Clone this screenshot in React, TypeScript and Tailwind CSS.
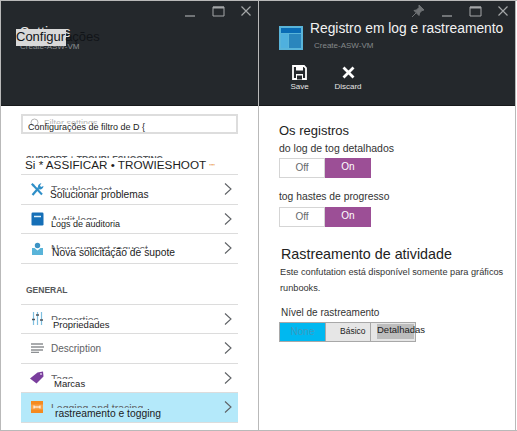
import type { ReactNode } from "react";

interface RowProps {
  icon: ReactNode;
  label: string;
  overlay: string;
  overlayClass: string;
  active?: boolean;
}

function WindowButtons({ pin }: { pin?: boolean }) {
  return (
    <div className="flex justify-end items-center h-[20px] pr-[5px] gap-[14px]">
      {pin && (
        <svg width="14" height="14" viewBox="0 0 14 14" className="mr-[1px]">
          <path d="M8 1l5 5-2 .5-2.500 2.500-.5 2.500-5-5 2.500-.5L8 3.500zM5 9l-4 4" fill="#6f7275" stroke="#6f7275" />
        </svg>
      )}
      <svg width="14" height="14" viewBox="0 0 14 14">
        <path d="M2 12h10" stroke="#8b8e91" strokeWidth="1.500" />
      </svg>
      <svg width="14" height="14" viewBox="0 0 14 14">
        <path d="M2 3h11v9H2z" fill="none" stroke="#a4a6a8" strokeWidth="1" />
        <path d="M2 3.500h11" stroke="#a4a6a8" strokeWidth="2" />
      </svg>
      <svg width="14" height="14" viewBox="0 0 14 14">
        <path d="M2.500 2.500l9 9M11.500 2.500l-9 9" stroke="#a4a6a8" strokeWidth="1.200" />
      </svg>
    </div>
  );
}

function Chevron() {
  return (
    <svg width="10" height="14" viewBox="0 0 10 14">
      <path d="M2 1.500l6 5.500-6 5.500" fill="none" stroke="#5f6266" strokeWidth="1.100" />
    </svg>
  );
}

function Row({ icon, label, overlay, overlayClass, active }: RowProps) {
  return (
    <div className={`relative flex items-center h-[29.500px] border-b-[1.500px] border-[#dcdcdc] ${active ? "bg-[#b4e9fa]" : ""}`}>
      <div className="w-[30px] flex justify-center pl-[2px]">{icon}</div>
      <span className="self-start mt-[8px] h-[7px] overflow-hidden text-[10.500px] leading-[15px] text-[#5e6164]">{label}</span>
      <div className="ml-auto mr-[5px] flex">
        <Chevron />
      </div>
      <span className={`absolute whitespace-nowrap leading-[12px] text-[#1c1c1c] ${overlayClass}`}>{overlay}</span>
    </div>
  );
}

function Toggle() {
  return (
    <div className="flex w-[92px] h-[20px] text-[10px] leading-[18px] text-center">
      <div className="w-[46px] border border-[#d5d5d5] text-[#66696c]">Off</div>
      <div className="w-[46px] bg-[#9c4f96] text-white">On</div>
    </div>
  );
}

const wrench = (
  <svg width="14" height="14" viewBox="0 0 14 14">
    <path d="M3 3l9 9.500" stroke="#2f8fc8" strokeWidth="2" fill="none" />
    <path d="M2.500 13L8.500 6" stroke="#2f8fc8" strokeWidth="2.200" fill="none" />
    <path d="M8 5.500c-.5-2 1-4 3.500-4.500L10 3.500l1 1.500 2.500-1c-.3 2.500-2.500 4-4.500 3.200z" fill="#2f8fc8" />
    <path d="M1 2.500L2.500 1l2 2-1.500 1.500z" fill="#2f8fc8" />
  </svg>
);

const auditLog = (
  <svg width="13" height="14" viewBox="0 0 13 14">
    <rect x="0.500" y="0.500" width="12" height="13" rx="1.200" fill="#156fb7" />
    <path d="M3 4.500h7" stroke="#dff1fb" strokeWidth="1.500" />
  </svg>
);

const support = (
  <svg width="11" height="13" viewBox="0 0 11 13">
    <path d="M0 6l2.500 0 3 2.500 3-2.500 2.500 0v7H0z" fill="#59b4d9" />
    <circle cx="5.500" cy="3.500" r="2.700" fill="#3c93c4" />
  </svg>
);

const sliders = (
  <svg width="11" height="13" viewBox="0 0 11 13">
    <path d="M1.500 0v13M5.500 0v13M9.500 0v13" stroke="#7fbfe0" strokeWidth="1.200" />
    <path d="M0 7.500h3M4 3h3M8 8h3" stroke="#4d5359" strokeWidth="1.500" />
  </svg>
);

const lines = (
  <svg width="13" height="10" viewBox="0 0 13 10">
    <path d="M0 1h12M0 4h13M0 7h12M0 9.500h8" stroke="#8d9093" strokeWidth="1.300" />
  </svg>
);

const tag = (
  <svg width="14" height="13" viewBox="0 0 14 13">
    <path d="M0 7.500L7.500 1.500 13 .5l.5 5-7 7z" fill="#7a3e9d" />
    <circle cx="11" cy="3" r="1" fill="#d9c4e6" />
  </svg>
);

const logging = (
  <svg width="12" height="12" viewBox="0 0 12 12">
    <path d="M0 0h12v12H0z" fill="#f58a1f" />
    <path d="M0 3.500h12v5H0z" fill="#f9a24a" />
    <path d="M3 4.500v3M9 4.500v3M3 6h6" stroke="#ffffff" strokeWidth="1" />
  </svg>
);

export default function App() {
  return (
    <div className="w-[517px] h-[431px] flex bg-white font-['Liberation_Sans',sans-serif] border-y border-[#b9b9b9]">
      {/* painel esquerdo */}
      <div className="w-[259px] border-x border-[#b9b9b9] flex flex-col">
        <div className="relative h-[105px] bg-[#24282c] border-b border-[#17191b] shrink-0">
          <WindowButtons />
          <div className="pl-[19px] pt-[3px] text-[14px] leading-[16px] text-[#e8e8e8]">Settings</div>
          <div className="pl-[19px] mt-[1px] text-[8px] leading-[12px] text-[#8b8e91]">Create-ASW-VM</div>
          <div className="absolute left-[15px] top-[28px] w-[50px] h-[17px] bg-[#d9d9d9]" />
          <span className="absolute left-[15px] top-[27px] text-[13px] leading-[18px] text-[#111418]">Configurações</span>
        </div>

        <div className="px-[20px] pt-[8px]">
          <div className="relative h-[20px] border-2 border-[#dddddd] flex items-start pt-[2px] pl-[7px] gap-[5px]">
            <svg width="9" height="9" viewBox="0 0 9 9">
              <circle cx="4.500" cy="4.500" r="3.500" fill="none" stroke="#b5b5b5" />
            </svg>
            <span className="h-[6px] overflow-hidden text-[9px] leading-[10px] text-[#b5b5b5]">Filter settings</span>
            <span className="absolute left-[5px] top-[5px] whitespace-nowrap text-[9px] leading-[12px] text-[#1c1c1c]">Configurações de filtro de D {"{"}</span>
          </div>

          <div className="relative h-[41px] border-b-[1.500px] border-[#dcdcdc]">
            <span className="absolute left-[5px] top-[20px] h-[4px] overflow-hidden whitespace-nowrap text-[8.500px] leading-[10px] font-bold text-[#55585b]">SUPPORT + TROUBLESHOOTING</span>
            <span className="absolute left-[4px] top-[24px] whitespace-nowrap text-[11.700px] leading-[14px] text-[#1c1c1c]">
              Si * ASSIFICAR • TROWIESHOOT <span className="text-[#e58a2a] text-[8px]">""</span>
            </span>
          </div>

          <Row icon={wrench} label="Troubleshoot" overlay="Solucionar problemas" overlayClass="left-[29px] top-[14px] text-[10.200px]" />
          <Row icon={auditLog} label="Audit logs" overlay="Logs de auditoria" overlayClass="left-[30px] top-[13px] text-[9px]" />
          <Row icon={support} label="New support request" overlay="Nova solicitação de supote" overlayClass="left-[31px] top-[13px] text-[10.300px]" />

          <div className="h-[41px] border-b-[1.500px] border-[#dcdcdc] pt-[20px] text-[8.500px] leading-[12px] font-bold text-[#55585b] pl-[5px]">GENERAL</div>

          <Row icon={sliders} label="Properties" overlay="Propriedades" overlayClass="left-[32px] top-[14px] text-[9.500px]" />
          <div className="flex items-center h-[29.500px] border-b-[1.500px] border-[#dcdcdc]">
            <div className="w-[30px] flex justify-center pl-[2px]">{lines}</div>
            <span className="text-[10px] text-[#5e6164]">Description</span>
            <div className="ml-auto mr-[5px] flex">
              <Chevron />
            </div>
          </div>
          <Row icon={tag} label="Tags" overlay="Marcas" overlayClass="left-[33px] top-[14px] text-[9.500px]" />
          <Row icon={logging} label="Logging and tracing" overlay="rastreamento e togging" overlayClass="left-[34px] top-[15px] text-[10.300px]" active />
        </div>
      </div>

      {/* painel direito */}
      <div className="w-[257px] border-r border-[#b9b9b9] flex flex-col">
        <div className="h-[105px] bg-[#24282c] border-b border-[#17191b] shrink-0">
          <WindowButtons pin />
          <div className="flex pl-[20px] gap-[7px] -mt-[2px]">
            <svg width="24" height="24" viewBox="0 0 24 24" className="mt-[7px] shrink-0">
              <path d="M0 0h24v24H0z" fill="#59b4d9" />
              <path d="M2 2h20v5H2z" fill="#0a6cb5" />
              <path d="M2 8h7v14H2z" fill="#4fb0de" />
              <path d="M10 8h12v14H10z" fill="#2a86bd" />
            </svg>
            <div>
              <div className="text-[13.800px] leading-[20px] text-[#f2f2f2] whitespace-nowrap">Registro em log e rastreamento</div>
              <div className="pl-[4px] mt-[2px] text-[8px] leading-[10px] text-[#85888b]">Create-ASW-VM</div>
            </div>
          </div>
          <div className="flex pl-[29px] pt-[14px] text-[8px] leading-[10px] text-[#e4e4e4]">
            <div className="w-[23px] flex flex-col items-center gap-[2px]">
              <svg width="15" height="15" viewBox="0 0 15 15">
                <path d="M1 1h11l2 2v11H1z" fill="none" stroke="#ffffff" strokeWidth="1.800" />
                <path d="M4 1.500h7v4H4zM4 9h7v5H4z" fill="#ffffff" />
                <path d="M5 10.500h5v4H5z" fill="#24282c" />
              </svg>
              <span>Save</span>
            </div>
            <div className="w-[34px] ml-[20px] flex flex-col items-center gap-[2px]">
              <svg width="15" height="15" viewBox="0 0 15 15">
                <path d="M2.500 2.500l10 10M12.500 2.500l-10 10" stroke="#ffffff" strokeWidth="2.800" />
              </svg>
              <span>Discard</span>
            </div>
          </div>
        </div>

        <div className="pl-[20px] pt-[16px]">
          <div className="text-[13px] leading-[18px] text-[#222]">Os registros</div>
          <div className="mt-[1px] text-[10.500px] leading-[14px] text-[#333]">do log de tog detalhados</div>
          <div className="mt-[3px]">
            <Toggle />
          </div>
          <div className="mt-[12px] text-[10.300px] leading-[14px] text-[#333]">tog hastes de progresso</div>
          <div className="mt-[3px]">
            <Toggle />
          </div>

          <div className="mt-[17px] text-[14.300px] leading-[20px] text-[#222] pl-[2px]">Rastreamento de atividade</div>
          <div className="w-[232px] text-[9.200px] leading-[16px] text-[#333] pl-[1px]">Este confutation está disponível somente para gráficos runbooks.</div>
          <div className="mt-[10px] text-[10px] leading-[14px] text-[#333] pl-[2px]">Nível de rastreamento</div>
          <div className="relative mt-[2px] flex w-[137px] h-[20px] text-[10px] leading-[18px] text-center border border-[#a8a8a8]">
            <div className="w-[45px] bg-[#00b8f0] text-[#3d9bc0]">None</div>
            <div className="w-[46px] bg-[#e6e6e6] border-x border-[#a8a8a8]" />
            <div className="w-[44px] bg-[#e6e6e6]" />
            <span className="absolute left-[60px] top-[-1px] text-[8.500px] text-[#1c1c1c]">Básico</span>
            <div className="absolute left-[97px] top-[1px] w-[37px] h-[15px] bg-[#bdbdbd]" />
            <span className="absolute left-[97px] top-[-2px] text-[9.500px] text-[#1c1c1c]">Detalhadas</span>
          </div>
        </div>
      </div>
    </div>
  );
}
